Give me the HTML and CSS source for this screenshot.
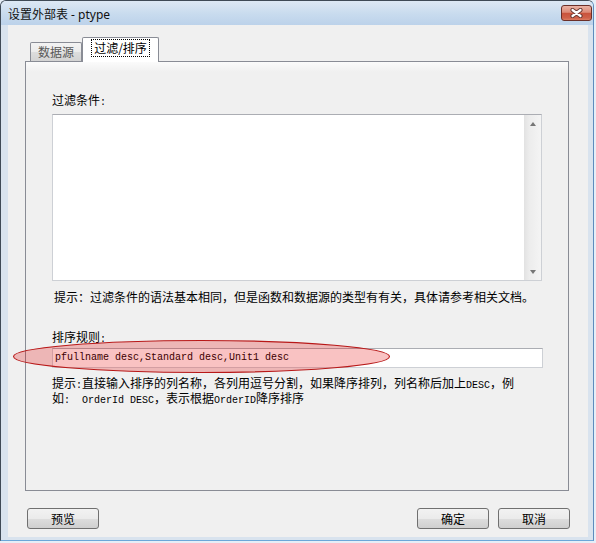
FILE: index.html
```html
<!DOCTYPE html>
<html>
<head>
<meta charset="utf-8">
<link rel="stylesheet" href="styles.css">
</head>
<body>
<div class="window">
  <div class="titlebar">
    <span class="title">设置外部表 - ptype</span>
    <div class="close">
      <svg width="13" height="10" viewBox="0 0 13 10">
        <path d="M2.5 2 L10.5 8 M10.5 2 L2.5 8" stroke="#6a3a34" stroke-width="4.2" stroke-linecap="round" fill="none"/>
        <path d="M2.5 2 L10.5 8 M10.5 2 L2.5 8" stroke="#ffffff" stroke-width="2.2" stroke-linecap="round" fill="none"/>
      </svg>
    </div>
  </div>
  <div class="frame">
    <div class="client">
      <div class="tabs">
        <div class="tab">数据源</div>
        <div class="tab active"><span class="focus">过滤/排序</span></div>
      </div>
      <div class="panel">
        <div class="label">过滤条件<span class="lat">:</span></div>
        <div class="textarea">
          <div class="scrollbar">
            <div class="sb-btn"><span class="arrow up"></span></div>
            <div class="sb-btn"><span class="arrow down"></span></div>
          </div>
        </div>
        <div class="hint hint1">提示：过滤条件的语法基本相同，但是函数和数据源的类型有有关，具体请参考相关文档。</div>
        <div class="label label2">排序规则<span class="lat">:</span></div>
        <div class="input">pfullname desc,Standard desc,Unit1 desc</div>
        <div class="hint hint2">提示<span class="lat">:</span>直接输入排序的列名称，各列用逗号分割，如果降序排列，列名称后加上<span class="lat">DESC</span>，例<br>如<span class="lat">:  OrderId DESC</span>，表示根据<span class="lat">OrderID</span>降序排序</div>
      </div>
      <div class="buttons">
        <button class="btn">预览</button>
        <span class="spacer"></span>
        <button class="btn">确定</button>
        <button class="btn btn-last">取消</button>
      </div>
    </div>
  </div>
</div>
<svg class="mark" width="380" height="36" viewBox="0 0 380 36">
  <ellipse cx="189.5" cy="17.5" rx="188" ry="16" fill="rgba(230,0,0,0.24)" stroke="#b81818" stroke-width="1.1"/>
</svg>
</body>
</html>
```

FILE: styles.css
```css
body {
  margin: 0;
  width: 596px;
  height: 543px;
  background: #e6eef7;
  position: relative;
  overflow: hidden;
  font-family: "Noto Sans CJK SC", "Liberation Sans", sans-serif;
  font-size: 12px;
  color: #000;
}

.window {
  box-sizing: border-box;
  width: 594px;
  height: 541px;
  display: flex;
  flex-direction: column;
  background: #d9e3ee;
  border: 1px solid #3f4a56;
  border-right-color: #5d8cbd;
  border-bottom-color: #6ba7d9;
  border-radius: 6px 6px 0 0;
  overflow: hidden;
}

.titlebar {
  height: 24px;
  flex: none;
  display: flex;
  align-items: flex-start;
  padding-left: 7px;
  background: linear-gradient(#dde8f4, #c8dbee 55%, #bcd2ea);
}

.title {
  margin-top: 4px;
  line-height: 19px;
  font-family: "Noto Sans", "Noto Sans CJK SC", sans-serif;
  font-size: 12px;
  color: #111;
}

.close {
  margin-left: auto;
  margin-right: 1px;
  margin-top: 4px;
  width: 31px;
  height: 16px;
  box-sizing: border-box;
  border: 1px solid #6b2f28;
  border-radius: 3px;
  background: linear-gradient(#eab3a5, #dc8a76 45%, #c9533c 52%, #cf6149 85%, #dc7d62);
  display: flex;
  align-items: center;
  justify-content: center;
}

.frame {
  flex: 1;
  display: flex;
  padding: 0 5px 3px 7px;
}

.client {
  flex: 1;
  background: #f0f0f0;
  display: flex;
  flex-direction: column;
  padding: 12px 19px 0 17px;
}

.tabs {
  display: flex;
  align-items: flex-end;
  height: 25px;
  padding-left: 5px;
  margin-bottom: -1px;
  position: relative;
  z-index: 1;
}

.tab {
  box-sizing: border-box;
  height: 19px;
  width: 52px;
  margin-bottom: 1px;
  border: 1px solid #898c95;
  border-bottom: none;
  border-radius: 2px 2px 0 0;
  background: linear-gradient(#f3f3f3, #ebebeb 50%, #dddddd 51%, #d3d3d3);
  color: #575757;
  text-align: center;
  line-height: 18px;
}

.tab.active {
  height: 25px;
  width: 77px;
  margin-bottom: 0;
  background: #ffffff;
  color: #000;
  padding-top: 1px;
  line-height: 16px;
}

.focus {
  display: inline-block;
  border: 1px dotted #000;
  padding: 0 2px;
  line-height: 16px;
}

.panel {
  box-sizing: border-box;
  width: 544px;
  height: 430px;
  flex: none;
  border: 1px solid #898c95;
  background: linear-gradient(#fbfbfb, #f0f0f0 10px);
  padding: 30px 26px 0 26px;
  display: flex;
  flex-direction: column;
}

.label {
  height: 16px;
  line-height: 16px;
}

.lat {
  font-family: "Liberation Mono", monospace;
  font-size: 10px;
  line-height: 10px;
  white-space: pre;
}

.textarea {
  box-sizing: border-box;
  width: 490px;
  height: 167px;
  margin-top: 6px;
  background: #fff;
  border: 1px solid #cdd0d5;
  border-top-color: #abadb3;
  display: flex;
  justify-content: flex-end;
}

.scrollbar {
  width: 17px;
  display: flex;
  flex-direction: column;
  justify-content: space-between;
  background: linear-gradient(to right, #e2e2e2, #ececec 30%, #f4f4f4);
}

.sb-btn {
  height: 17px;
  display: flex;
  align-items: center;
  justify-content: center;
}

.arrow {
  width: 0;
  height: 0;
  border-left: 3.5px solid transparent;
  border-right: 3.5px solid transparent;
}

.arrow.up {
  border-bottom: 4px solid #767676;
}

.arrow.down {
  border-top: 4px solid #767676;
}

.hint {
  line-height: 16px;
  white-space: nowrap;
}

.hint1 {
  height: 16px;
  margin-top: 8px;
  margin-left: 2px;
}

.label2 {
  margin-top: 24px;
}

.input {
  box-sizing: border-box;
  width: 491px;
  height: 20px;
  margin-top: 3px;
  background: #fff;
  border: 1px solid #cdd0d5;
  border-top-color: #abadb3;
  padding-left: 2px;
  font-family: "Liberation Mono", monospace;
  font-size: 10px;
  line-height: 18px;
}

.hint2 {
  margin-top: 8px;
  line-height: 14px;
}

.buttons {
  display: flex;
  margin-top: 17px;
  padding-left: 2px;
  margin-right: -1px;
}

.spacer {
  flex: 1;
}

.btn {
  box-sizing: border-box;
  width: 72px;
  height: 21px;
  padding: 0;
  margin: 0 9px 0 0;
  border: 1px solid #707070;
  border-radius: 3px;
  background: linear-gradient(#f2f2f2, #ebebeb 50%, #dddddd 51%, #cfcfcf);
  font-family: "Noto Sans CJK SC", sans-serif;
  font-size: 12px;
  line-height: 18px;
  color: #000;
}

.btn-last {
  margin-right: 0;
}

.mark {
  position: absolute;
  left: 12px;
  top: 339px;
  pointer-events: none;
}
```
